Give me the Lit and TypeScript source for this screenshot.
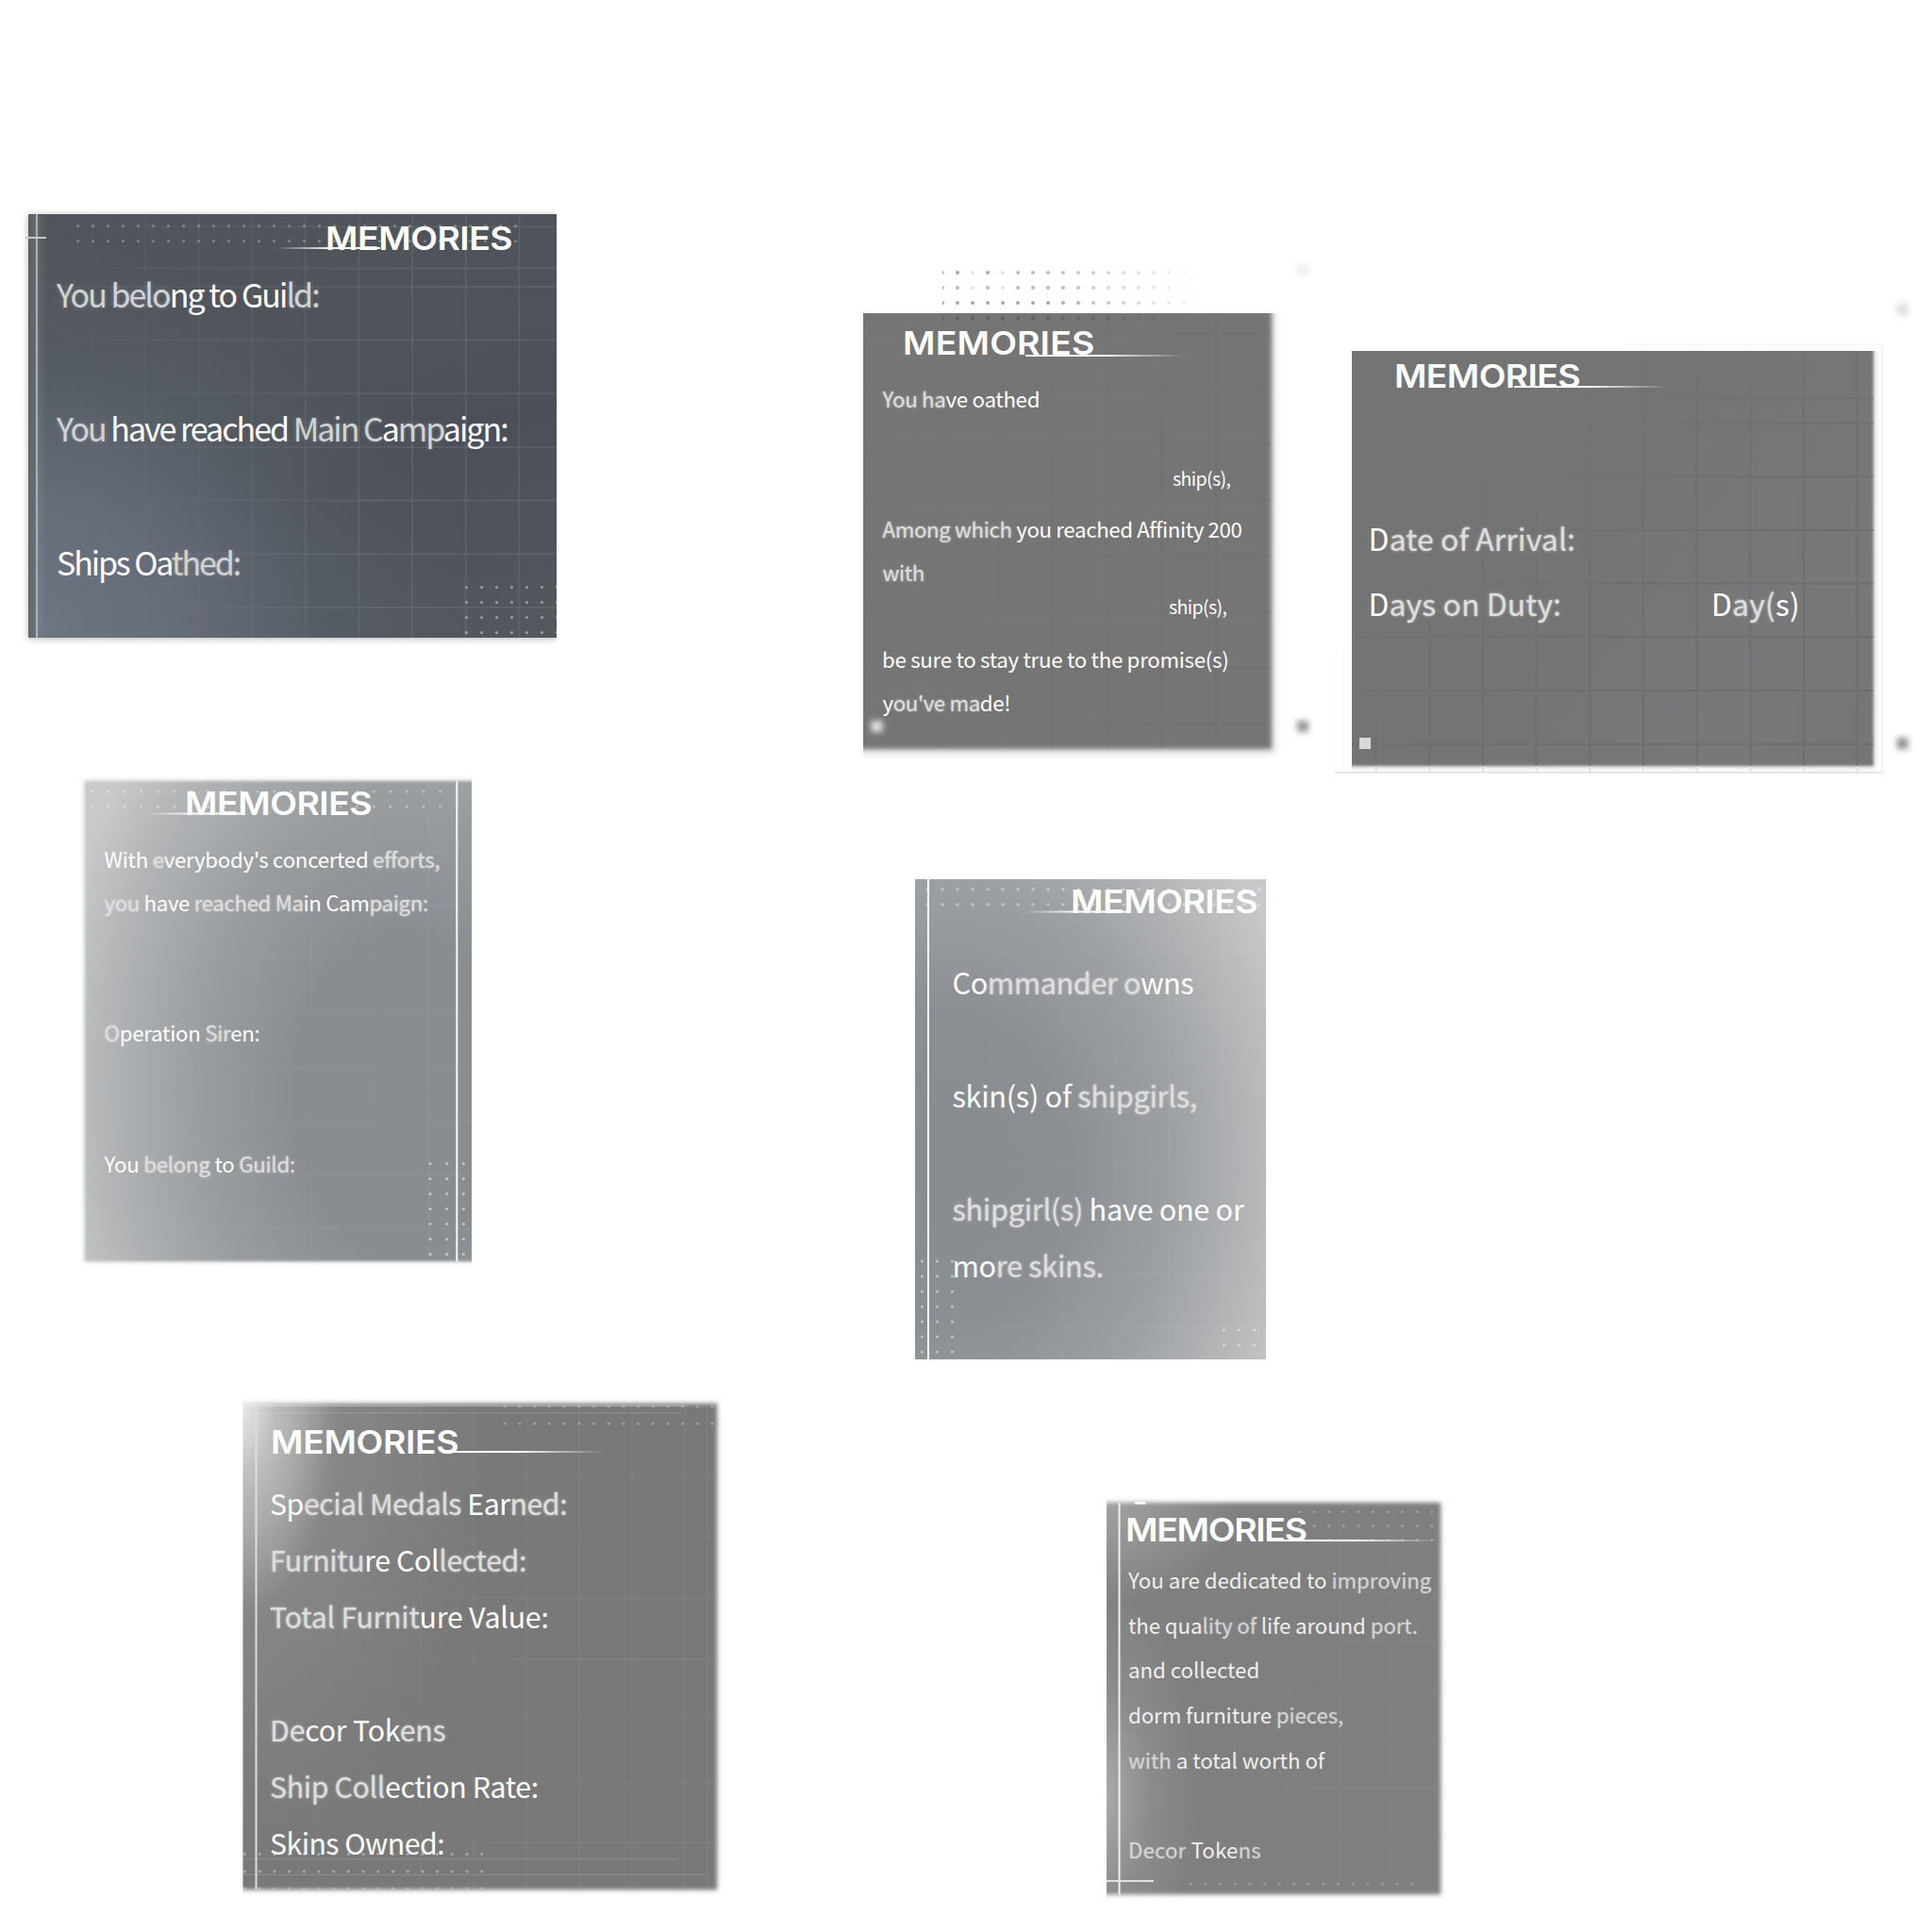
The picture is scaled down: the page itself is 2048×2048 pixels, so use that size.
import { LitElement, html, svg, css, nothing } from "lit";
import { customElement, property } from "lit/decorators.js";
import { styleMap } from "lit/directives/style-map.js";

// Text markup: parts wrapped in ~ are drawn in the softer, glowing tone.
interface Part { x: number; w: number; t: string }
interface Row { y: number; fs: number; parts: Part[] }
interface Dots { x: number; y: number; dx: number; dy: number; nx: number; ny: number; fill: string; r?: number; fade?: boolean }
interface Line { x: number; y: number; w: number; h: number; fill: string; glow?: boolean }
interface Panel {
  id: string; x: number; y: number; w: number; h: number;
  title: { x: number; y: number; w: number };
  rule: { x: number; y: number; w: number; dir: "left" | "right" };
  rows: Row[]; dots: Dots[]; lines: Line[];
  grid?: { xs: number[]; ys: number[]; color: string; diagonal?: boolean };
}

const row = (y: number, fs: number, ...p: (number | string)[]): Row => {
  const parts: Part[] = [];
  for (let i = 0; i < p.length; i += 3) parts.push({ x: p[i] as number, w: p[i + 1] as number, t: p[i + 2] as string });
  return { y, fs, parts };
};
const steps = (from: number, step: number, n: number) => Array.from({ length: n }, (_, i) => from + step * i);

const PANELS: Panel[] = [
  {
    id: "guild", x: 30, y: 227, w: 560, h: 449,
    title: { x: 346.5, y: 239.5, w: 194 }, rule: { x: 292, y: 262, w: 111, dir: "left" },
    rows: [
      row(326.5, 34, 60, 277, "~You belo~ng to Gui~ld:~"),
      row(468.5, 34, 60, 477, "~You~ have reached ~Main C~a~mp~aign:"),
      row(610.5, 34, 60, 194, "Ships Oa~thed:~"),
    ],
    dots: [
      { x: 82.5, y: 239.5, dx: 16, dy: 16, nx: 30, ny: 2, fill: "rgba(255,255,255,.28)" },
      { x: 494.5, y: 622.5, dx: 16, dy: 16, nx: 7, ny: 4, fill: "rgba(205,215,210,.55)" },
    ],
    lines: [
      { x: 38, y: 227, w: 2, h: 449, fill: "#aeb1b4", glow: true },
      { x: 27, y: 251, w: 22, h: 2, fill: "#c4c8cb" },
    ],
    grid: { xs: steps(97, 56.6, 9), ys: [240, 284, 303.5, ...steps(360, 56.7, 6)], color: "rgba(120,126,136,.5)" },
  },
  {
    id: "oath", x: 915, y: 332, w: 433, h: 462,
    title: { x: 958.5, y: 351, w: 199 }, rule: { x: 1087, y: 376, w: 169, dir: "right" },
    rows: [
      row(432, 22.3, 935.5, 165, "~You ha~ve oathed"),
      row(515.8, 19.5, 1243, 60, "ship(s),"),
      row(569.7, 22.3, 935.5, 380, "~Among which~ you reached Affinity 200"),
      row(615.7, 22.3, 935.5, 43, "~with~"),
      row(652, 19.5, 1239, 60, "ship(s),"),
      row(707.7, 22.3, 935, 366, "be sure to stay true to the promise(s)"),
      row(753.7, 22.3, 935.5, 134, "y~ou've ma~de!"),
    ],
    dots: [{ x: 999, y: 289, dx: 16, dy: 16.05, nx: 18, ny: 4, fill: "#5c5c5c", r: 2, fade: true }],
    lines: [],
    grid: { xs: steps(941, 58, 7), ys: steps(353, 59, 8), color: "rgba(90,90,90,.2)" },
  },
  {
    id: "duty", x: 1433, y: 372, w: 553, h: 440,
    title: { x: 1479.5, y: 385.5, w: 193 }, rule: { x: 1605, y: 409, w: 164, dir: "right" },
    rows: [
      row(583.5, 32, 1450.5, 218, "D~ate of Arrival:~"),
      row(652.7, 32, 1450.5, 203, "D~ays on Duty:~", 1814, 92, "D~ay(~s)"),
    ],
    dots: [],
    lines: [
      { x: 1994, y: 366, w: 2, h: 453, fill: "#f3f3f3" },
      { x: 1415, y: 818, w: 581, h: 1.6, fill: "#e0e0e0" },
      { x: 1423, y: 690, w: 1.5, h: 128, fill: "#f7f7f7" },
      { x: 1415, y: 690, w: 1.5, h: 128, fill: "#fcfcfc" },
      { x: 1720, y: 365, w: 275, h: 1, fill: "#f6f6f6" },
      ...steps(1458, 56.7, 10).map((x) => ({ x, y: 812, w: 1.5, h: 6, fill: "#dcdcdc" })),
    ],
    grid: { xs: steps(1458, 56.7, 10), ys: [422, ...steps(448, 56.7, 7)], color: "#68696b", diagonal: true },
  },
  {
    id: "siren", x: 90, y: 827.5, w: 410, h: 509,
    title: { x: 198, y: 838.5, w: 194 }, rule: { x: 152, y: 861, w: 104, dir: "left" },
    rows: [
      row(920, 22.3, 110.5, 354, "With ~e~verybody's concerted ~efforts,~"),
      row(966, 22.3, 110.5, 342, "~you~ have ~reached Ma~in Cam~paign:~"),
      row(1104, 22.3, 110.5, 164, "~O~peration ~Sir~en:"),
      row(1242.5, 22.3, 110.5, 201, "You ~belong~ to ~Guild:~"),
    ],
    dots: [
      { x: 97, y: 838.5, dx: 17.6, dy: 16, nx: 23, ny: 2, fill: "rgba(255,255,255,.35)" },
      { x: 456, y: 1233, dx: 17.7, dy: 16, nx: 3, ny: 7, fill: "rgba(255,255,255,.5)" },
    ],
    lines: [{ x: 483.3, y: 827, w: 2, h: 510, fill: "#f6f6f6" }],
    grid: { xs: steps(142, 62.5, 6), ys: steps(902, 57, 8), color: "rgba(255,255,255,.05)" },
  },
  {
    id: "skins", x: 970, y: 931.5, w: 372, h: 509.5,
    title: { x: 1137, y: 942.5, w: 194 }, rule: { x: 1084, y: 965, w: 111, dir: "left" },
    rows: [
      row(1054.5, 30.7, 1009.5, 254.5, "Co~mmander o~wns"),
      row(1174.5, 30.7, 1009.5, 258.5, "skin(s) of ~shipgirls,~"),
      row(1294.5, 30.7, 1009.5, 307.5, "~shipgirl(s)~ have one or"),
      row(1354.5, 30.7, 1009.5, 159, "mo~re skins.~"),
    ],
    dots: [
      { x: 983, y: 942.3, dx: 16, dy: 16, nx: 23, ny: 2, fill: "rgba(255,255,255,.4)" },
      { x: 977.5, y: 1336.5, dx: 16, dy: 16, nx: 3, ny: 7, fill: "rgba(255,255,255,.45)" },
      { x: 1297.5, y: 1409.5, dx: 16, dy: 16, nx: 3, ny: 2, fill: "rgba(225,235,230,.65)" },
    ],
    lines: [{ x: 983, y: 931, w: 2, h: 510, fill: "#ffffff" }],
    grid: { xs: steps(1011, 57, 6), ys: steps(1007, 57, 8), color: "rgba(255,255,255,.05)" },
  },
  {
    id: "medals", x: 257.5, y: 1487, w: 502.5, h: 515.5,
    title: { x: 288.8, y: 1515.8, w: 195 }, rule: { x: 470, y: 1538, w: 170, dir: "right" },
    rows: [
      row(1606.2, 30.3, 286, 314, "Sp~ecial Medals~ Ear~ned:~"),
      row(1666.2, 30.3, 286, 271, "~Furnitu~re Col~lected:~"),
      row(1726.2, 30.3, 286, 294.5, "~Total Furnit~ure Value:"),
      row(1846.2, 30.3, 286, 185, "~De~cor Tok~ens~"),
      row(1906.2, 30.3, 286, 283, "~Ship Coll~ection Rate:"),
      row(1966.2, 30.3, 286, 184, "Skins Owned:"),
    ],
    dots: [
      { x: 534.7, y: 1491, dx: 15.7, dy: 18, nx: 15, ny: 2, fill: "rgba(255,255,255,.28)" },
      { x: 259, y: 1965.5, dx: 15.7, dy: 18.3, nx: 17, ny: 3, fill: "rgba(255,255,255,.35)" },
    ],
    lines: [
      { x: 270, y: 1487, w: 2, h: 516, fill: "#dedede" },
      { x: 258, y: 1489.5, w: 470, h: 1.5, fill: "rgba(255,255,255,.22)" },
      { x: 258, y: 1497, w: 463, h: 1.5, fill: "rgba(255,255,255,.12)" },
      { x: 258, y: 1970, w: 460, h: 1.5, fill: "rgba(255,255,255,.1)" },
      { x: 258, y: 1986.5, w: 490, h: 1.5, fill: "rgba(255,255,255,.12)" },
    ],
    grid: { xs: [...steps(333, 56, 8), 749], ys: steps(1563, 65, 7), color: "rgba(255,255,255,.06)" },
  },
  {
    id: "dorm", x: 1173, y: 1592.5, w: 353.5, h: 415.5,
    title: { x: 1194.5, y: 1608.8, w: 188 }, rule: { x: 1354, y: 1631.5, w: 172, dir: "right" },
    rows: [
      row(1683.7, 22.3, 1196, 320, "You are dedicated to ~improving~"),
      row(1731.5, 22.3, 1196, 305, "the qua~lity of~ life around ~port.~"),
      row(1779, 22.3, 1196, 138, "and collected"),
      row(1827, 22.3, 1196, 227, "dorm furniture ~pieces,~"),
      row(1874.7, 22.3, 1196, 206.5, "~with~ a total worth of"),
      row(1970, 22.3, 1196, 139, "~Decor ~Toke~ns~"),
    ],
    dots: [
      { x: 1377.5, y: 1602, dx: 15.6, dy: 15, nx: 10, ny: 3, fill: "rgba(255,255,255,.24)" },
      { x: 1262.5, y: 1996.5, dx: 15.6, dy: 16, nx: 16, ny: 1, fill: "rgba(255,255,255,.2)" },
    ],
    lines: [
      { x: 1185.5, y: 1592, w: 2, h: 416, fill: "#f0f0f0" },
      { x: 1203, y: 1591.5, w: 11.5, h: 2.5, fill: "#ffffff" },
      { x: 1173, y: 1992.5, w: 50, h: 1.8, fill: "#e8e8e8" },
    ],
    grid: { xs: steps(1253, 55.5, 5), ys: steps(1635, 52, 7), color: "rgba(255,255,255,.04)" },
  },
];

const LINE = 30; // line-height of every text row
const TITLE_STRETCH = 1.1; // the heading face is drawn extended

@customElement("memory-panel")
class MemoryPanel extends LitElement {
  @property({ attribute: false }) panel!: Panel;

  static styles = css`
    :host { display: block; position: relative; width: 100%; height: 100%; }
    .clip, .decor { position: absolute; inset: 0; }
    .fill { position: absolute; inset: 0; }
    .decor { width: 100%; height: 100%; overflow: visible; }

    .clip.guild { box-shadow: 0 1px 7px rgba(60, 66, 74, 0.4); clip-path: inset(-8px 0 -14px -14px); }
    .fill.guild {
      background: linear-gradient(90deg, rgba(92, 98, 100, 0.75) 8px, transparent 9px),
        radial-gradient(ellipse 85% 95% at 0% 100%, #6e7684 0%, rgba(105, 113, 126, 0.85) 35%, rgba(92, 99, 107, 0.45) 68%, transparent 100%),
        linear-gradient(160deg, #50565b 0%, #4e5359 45%, #4b4f57 62%, #53595e 100%);
    }
    .clip.oath { clip-path: inset(0 -20px -20px 0); }
    .fill.oath { inset: -6px 0 0 -12px; background: #757575; filter: blur(2.6px); box-shadow: 3px 4px 7px rgba(0, 0, 0, 0.16); }
    .clip.duty { clip-path: inset(0 -20px -10px 0); }
    .fill.duty {
      inset: -6px 0 0 -12px; filter: blur(1.8px); box-shadow: 2px 2px 6px rgba(0, 0, 0, 0.14);
      background: linear-gradient(125deg, #747474 50%, #777879 80%, #737577);
    }
    .clip.siren { clip-path: inset(-14px 0 -14px -14px); }
    .fill.siren {
      inset: 0.5px -10px 0 0; filter: blur(1.6px); box-shadow: 0 0 5px rgba(80, 84, 88, 0.3);
      background: radial-gradient(ellipse 90% 110% at 80% 65%, #888c8f 0%, #898d91 30%, #9a9ea1 58%, #b4b6b8 85%, #c9cacb 100%);
    }
    .fill.skins {
      background: radial-gradient(ellipse 106% 100% at 10% 60%, #888c8f 0%, #8b8f93 32%, #9da0a3 60%, #b4b6b8 82%, #c8c9ca 100%);
    }
    .clip.medals { clip-path: inset(-8px -16px -10px 0); }
    .fill.medals {
      inset: 1px 0 0 -12px; filter: blur(2px); box-shadow: 0 0 5px rgba(0, 0, 0, 0.22);
      background: radial-gradient(ellipse 95px 220px at 12px 0, rgba(236, 236, 236, 0.95) 0%, rgba(220, 220, 220, 0.55) 35%, transparent 100%),
        radial-gradient(ellipse 270px 460px at 0 20px, #a2a2a2 0%, rgba(146, 146, 146, 0.5) 45%, transparent 100%), #797979;
    }
    .clip.dorm { clip-path: inset(-8px -16px -12px 0); }
    .fill.dorm {
      inset: 0.5px 0 0 -12px; filter: blur(2px); box-shadow: 0 0 5px rgba(0, 0, 0, 0.22);
      background: radial-gradient(ellipse 105px 230px at 5px 310px, rgba(180, 180, 180, 0.85), rgba(158, 158, 158, 0.4) 50%, transparent),
        radial-gradient(ellipse 150px 110px at 5px 0, rgba(172, 172, 172, 0.8), transparent), #7f7f7f;
    }

    .body { position: relative; display: flex; flex-direction: column; align-items: flex-start; }
    .title {
      font: 600 34px/25px Inter, sans-serif; height: 25px; color: #fff; white-space: pre;
      transform: translateY(-0.4px) scaleX(1.1); transform-origin: left;
    }
    .row {
      display: flex; height: 30px; line-height: 30px; color: #fff; white-space: pre;
      font-family: "Noto Sans CJK SC", "Noto Sans CJK JP", sans-serif; font-weight: 400;
    }
    .body.dorm .row { color: #efefef; }
    .fit { display: block; flex: none; }
    .soft { color: #dedede; text-shadow: 0 0 2px rgba(255, 255, 255, 0.45), 0 0 4px rgba(255, 255, 255, 0.22); }
    .body.guild .soft { color: #d2d3d5; text-shadow: 0 0 4px rgba(255, 255, 255, 0.25); }
    .body.dorm .soft { color: #d6d6d6; text-shadow: 0 0 2px rgba(255, 255, 255, 0.25); }
  `;

  // Spreads each label over the width it is designed for.
  updated() {
    this.renderRoot.querySelectorAll<HTMLElement>(".fit").forEach((el) => {
      el.style.letterSpacing = "0px";
      const count = Array.from(el.textContent ?? "").length;
      const natural = el.offsetWidth;
      el.style.letterSpacing = `${(Number(el.dataset.w) + 1.5 - natural) / (count - 0.5)}px`;
    });
  }

  private rich(t: string) {
    return t.split("~").map((s, i) => (s ? (i % 2 ? html`<span class="soft">${s}</span>` : html`${s}`) : nothing));
  }

  private rowsView() {
    const p = this.panel;
    let bottom = p.title.y + 25;
    return p.rows.map((r) => {
      const top = r.y - LINE / 2 - 0.436 * r.fs;
      const style = { marginTop: `${top - bottom}px`, fontSize: `${r.fs}px` };
      bottom = top + LINE;
      let right = p.x;
      return html`<div class="row" style=${styleMap(style)}>${r.parts.map((q) => {
        const ml = q.x - right;
        right = q.x + q.w;
        return html`<div style=${styleMap({ marginLeft: `${ml}px`, width: `${q.w}px`, display: "flex" })}><span class="fit" data-w=${q.w}>${this.rich(q.t)}</span></div>`;
      })}</div>`;
    });
  }

  private decor() {
    const p = this.panel;
    const g = p.grid;
    return svg`
      <defs>
        <linearGradient id="rule" x1=${p.rule.dir === "left" ? 1 : 0} x2=${p.rule.dir === "left" ? 0 : 1} y1="0" y2="0">
          <stop offset="0" stop-color="#fff"/><stop offset=".45" stop-color="#fff"/><stop offset="1" stop-color="#fff" stop-opacity="0"/>
        </linearGradient>
        <linearGradient id="gridfade" x1="0" x2=${g?.diagonal ? 0.8 : 1} y1="0" y2=${g?.diagonal ? 0.8 : 0.1}>
          <stop offset=${g?.diagonal ? 0.3 : 0} stop-color="#fff" stop-opacity=${g?.diagonal ? 0 : 0.1}/><stop offset=".75" stop-color="#fff" stop-opacity=".6"/>
        </linearGradient>
        <mask id="gm"><rect x=${p.x} y=${p.y} width=${p.w} height=${p.h} fill="url(#gridfade)"/></mask>
        <filter id="soft" x="-100%" y="-100%" width="300%" height="300%"><feGaussianBlur stdDeviation="3"/></filter>
        <filter id="halo" filterUnits="userSpaceOnUse" x=${p.x} y=${p.y} width="60" height=${p.h}><feGaussianBlur stdDeviation="4"/></filter>
        <clipPath id="dc"><rect x=${p.id === "oath" ? 999 : p.x} y=${p.y - 60} width=${p.id === "oath" ? 300 : p.w} height=${p.h + 60}/></clipPath>
      </defs>
      ${g ? svg`<g mask="url(#gm)" stroke=${g.color} stroke-width="2">
        ${g.xs.map((x) => svg`<line x1=${x + 0.5} x2=${x + 0.5} y1=${p.y} y2=${p.y + p.h}/>`)}
        ${g.ys.map((y) => svg`<line x1=${p.x} x2=${p.x + p.w} y1=${y + 0.5} y2=${y + 0.5}/>`)}
      </g>` : nothing}
      <g clip-path="url(#dc)">
      ${p.dots.map((d) => steps(0, 1, d.ny).map((j) => steps(0, 1, d.nx).map((i) => {
        let o = 1;
        if (d.fade) {
          o = [0.42, 0.44, 0.55, 0.85][j] * (i > 7 ? Math.max(0.05, 1 - (i - 7) / 10.5) : 1);
          if (j < 2 && (i === 2 || i === 4)) o *= 0.4;
          if (j === 0 && (i === 1 || i === 3)) o *= 1.3;
        }
        return svg`<circle cx=${d.x + d.dx * i} cy=${d.y + d.dy * j} r=${d.r ?? 1.6} fill=${d.fill} opacity=${o}/>`;
      })))}
      </g>
      ${p.lines.map((l) => svg`
        ${l.glow ? svg`<rect x=${l.x - 1} y=${l.y} width=${l.w + 3} height=${l.h} fill=${l.fill} opacity=".35" filter="url(#halo)"/>` : nothing}
        <rect x=${l.x} y=${l.y} width=${l.w} height=${l.h} fill=${l.fill}/>`)}
      ${p.id === "oath" ? svg`
        <rect x="923.5" y="764" width="12" height="12" fill="#e4e4e4" filter="url(#soft)"/>
        <rect x="1375" y="764" width="12" height="12" fill="#949696" filter="url(#soft)"/>
        <rect x="1375" y="280" width="12" height="12" fill="#efefef" filter="url(#soft)"/>` : nothing}
      ${p.id === "duty" ? svg`
        <rect x="1441" y="782" width="12" height="12" fill="#d9d9d9"/>
        <rect x="2011" y="782" width="11.5" height="12" fill="#8c8e8e" filter="url(#soft)"/>
        <rect x="2011" y="322" width="11.5" height="12" fill="#dddddd" filter="url(#soft)"/>` : nothing}
      <rect x=${p.rule.x} y=${p.rule.y} width=${p.rule.w} height="2" fill="url(#rule)"/>`;
  }

  render() {
    const p = this.panel;
    return html`
      <div class="clip ${p.id}"><div class="fill ${p.id}"></div></div>
      <svg class="decor" viewBox="${p.x} ${p.y} ${p.w} ${p.h}">${this.decor()}</svg>
      <div class="body ${p.id}">
        <div class="title" style=${styleMap({ marginTop: `${p.title.y - p.y}px`, marginLeft: `${p.title.x - p.x - 2}px` })}><span class="fit" data-w=${(p.title.w + 3) / TITLE_STRETCH}>MEMORIES</span></div>
        ${this.rowsView()}
      </div>`;
  }
}

@customElement("app-root")
class AppRoot extends LitElement {
  static styles = css`
    :host { display: block; width: 2048px; height: 2048px; position: relative; overflow: hidden; background: #fff; }
    .slot { position: absolute; }
  `;
  render() {
    return PANELS.map((p) => html`<div class="slot" style=${styleMap({ left: `${p.x}px`, top: `${p.y}px`, width: `${p.w}px`, height: `${p.h}px` })}>
      <memory-panel .panel=${p}></memory-panel></div>`);
  }
}
